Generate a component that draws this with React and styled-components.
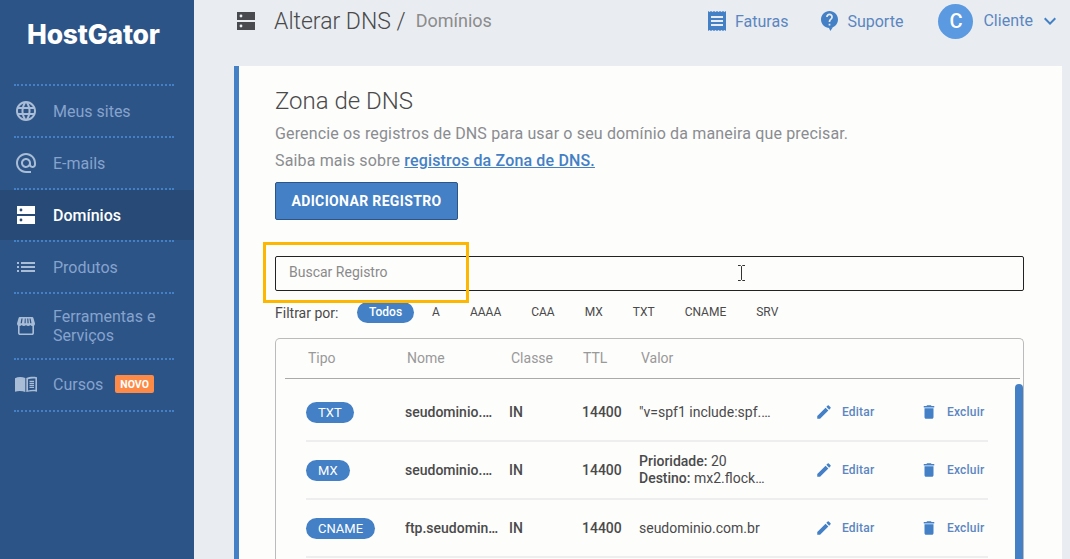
import React from 'react';
import styled, { createGlobalStyle } from 'styled-components';
import {
  MdLanguage, MdAlternateEmail, MdList, MdEdit, MdDelete, MdExpandMore,
} from 'react-icons/md';

const blue = '#4480c5';
const navy = '#2d5487';

const GlobalStyle = createGlobalStyle`
  html, body { margin: 0; padding: 0; height: 100%; overflow: hidden; }
  body { font-family: Roboto, "Liberation Sans", sans-serif; color: #4a4a4a; }
  * { box-sizing: border-box; }
`;

const Page = styled.div`
  display: flex;
  width: 1070px;
  height: 559px;
  overflow: hidden;
  background: #e9edf2;
`;

const Sidebar = styled.aside`
  flex: 0 0 194px;
  background: ${navy};
`;

const Logo = styled.div`
  height: 84px;
  padding: 18px 0 0 27px;
  font-family: Inter, sans-serif;
  font-size: 26.5px;
  font-weight: 800;
  line-height: 32px;
  letter-spacing: -0.2px;
  color: #fff;
`;

const Divider = styled.div`
  width: 160px;
  margin-left: 14px;
  border-top: 2px dotted ${blue};
`;

const NavItem = styled.a`
  display: flex;
  align-items: center;
  gap: 15px;
  height: ${(p) => (p.$tall ? 64 : 50)}px;
  padding: 0 0 ${(p) => (p.$raised ? 2 : 0)}px 14px;
  font-size: 16px;
  line-height: 19px;
  color: ${(p) => (p.$active ? '#fff' : '#86a3cd')};
  background: ${(p) => (p.$active ? '#274a77' : 'transparent')};
  font-weight: ${(p) => (p.$active ? 500 : 400)};
`;

const IconSlot = styled.span`
  display: flex;
  align-items: center;
  justify-content: center;
  flex: 0 0 24px;
  height: 24px;
  color: ${(p) => (p.$active ? '#fff' : '#a9bdd6')};
`;

const NewBadge = styled.span`
  margin-left: -3px;
  padding: 0 5px;
  height: 18px;
  border-radius: 2px;
  background: #fd8a46;
  color: #fff;
  font-size: 10.5px;
  font-weight: 700;
  line-height: 19px;
`;

const Main = styled.main`
  flex: 1;
  min-width: 0;
  padding: 0 8px 0 40px;
`;

const Header = styled.header`
  display: flex;
  align-items: center;
  height: 42px;
  margin-bottom: 24px;
  padding-left: 3px;
`;

const HeaderIcon = styled.span`
  display: flex;
  color: #484a50;
`;

const PageTitle = styled.h1`
  margin: 0 0 0 19px;
  font-size: 23px;
  font-weight: 300;
  color: #4a4a4a;
`;

const Crumb = styled.span`
  margin: -2px 0 0 10px;
  font-size: 18px;
  color: #8c8c8c;
`;

const HeaderLink = styled.a`
  display: flex;
  align-items: center;
  gap: ${(p) => p.$gap}px;
  margin-right: ${(p) => p.$after}px;
  margin-left: ${(p) => (p.$first ? 'auto' : 0)};
  font-size: 16px;
  color: #5b86c0;

  svg { color: ${blue}; }
`;

const User = styled.div`
  display: flex;
  align-items: center;
  font-size: 16px;
  color: #5b86c0;

  svg { margin-left: 5px; color: ${blue}; }
`;

const UserName = styled.span`
  margin-top: -2px;
  letter-spacing: 0.05px;
`;

const Avatar = styled.span`
  display: flex;
  align-items: center;
  justify-content: center;
  width: 35px;
  height: 35px;
  margin-right: 10px;
  border-radius: 50%;
  background: #5b9ae0;
  color: #fff;
  font-size: 20px;
  font-weight: 500;
`;

const Card = styled.section`
  height: 493px;
  padding: 21px 38px 0 36px;
  border-left: 5px solid ${blue};
  background: #fdfdfc;
`;

const CardTitle = styled.h2`
  margin: 0 0 5px;
  font-size: 24px;
  font-weight: 300;
  line-height: 28px;
  color: #4a4a4a;
`;

const Lead = styled.p`
  margin: 0;
  font-size: 16px;
  line-height: 27px;
  letter-spacing: 0.155px;
  color: #8a8c90;

  a {
    color: ${blue};
    font-weight: 500;
    text-decoration: underline;
  }
`;

const AddButton = styled.button`
  display: block;
  width: 183px;
  height: 38px;
  margin-top: 8px;
  padding: 0;
  border: 1px solid ${navy};
  border-radius: 2px;
  background: ${blue};
  color: #fff;
  font-family: inherit;
  font-size: 14px;
  font-weight: 700;
  letter-spacing: 0.35px;
`;

const SearchWrap = styled.div`
  position: relative;
  margin-top: 36px;
`;

const SearchInput = styled.input`
  display: block;
  width: 749px;
  height: 35px;
  padding: 0 13px 3px;
  border: 1px solid #222;
  border-radius: 2px;
  background: #fdfdfc;
  font-family: inherit;
  font-size: 14px;

  &::placeholder { color: #8a8a8a; opacity: 1; }
`;

const Highlight = styled.div`
  position: absolute;
  left: -12px;
  top: -14px;
  width: 206px;
  height: 61px;
  border: 3px solid #fdb700;
`;

const Cursor = styled.svg`
  position: absolute;
  left: 462px;
  top: 9px;
`;

const FilterRow = styled.div`
  display: flex;
  align-items: center;
  height: 21px;
  margin-top: 11px;
  font-size: 14px;
`;

const FilterLabel = styled.span`
  width: 82px;
  color: #4a4a4a;
`;

const FilterChip = styled.span`
  margin-right: ${(p) => p.$gap}px;
  padding: ${(p) => (p.$active ? '0 12px' : '0')};
  border-radius: 11px;
  background: ${(p) => (p.$active ? blue : 'transparent')};
  color: ${(p) => (p.$active ? '#fff' : '#4a4a4a')};
  font-size: 12px;
  font-weight: ${(p) => (p.$active ? 500 : 400)};
  line-height: 21px;
`;

const TableBox = styled.div`
  position: relative;
  width: 749px;
  height: 240px;
  margin-top: 15px;
  border: 1px solid #bbb;
  border-bottom: 0;
  border-radius: 5px 5px 0 0;
`;

const HeadRow = styled.div`
  display: grid;
  grid-template-columns: 99px 104px 72px 58px 1fr;
  align-items: center;
  height: 40px;
  margin: 0 3px 0 9px;
  padding: 0 0 2px 23px;
  border-bottom: 1px solid #aaa;
  font-size: 14px;
  color: #999;
`;

const Rows = styled.div`
  margin: 5px 0 0 30px;
  width: 682px;
`;

const Row = styled.div`
  display: grid;
  grid-template-columns: 99px 104px 73px 57px 178px 107px 64px;
  align-items: center;
  height: 58px;
  border-bottom: 2px solid #eee;
  font-size: 14px;
  line-height: 17px;
  color: #4a4a4a;
`;

const TypePill = styled.span`
  justify-self: start;
  padding: 0 12px;
  border-radius: 11px;
  background: ${blue};
  color: #fff;
  font-size: 13px;
  line-height: 21px;
`;

const Cell = styled.span`
  overflow: hidden;
  padding-right: ${(p) => p.$pad || 0}px;
  text-overflow: ellipsis;
  white-space: nowrap;
  font-weight: ${(p) => (p.$strong ? 500 : 400)};
`;

const Strong = styled.b`
  font-weight: 500;
`;

const Action = styled.a`
  display: flex;
  align-items: center;
  gap: 9px;
  margin-left: ${(p) => p.$shift}px;
  font-size: 12px;
  font-weight: 500;
  letter-spacing: 0.2px;
  color: #5b86c0;

  svg { flex: none; color: ${blue}; }
`;

const Scrollbar = styled.div`
  position: absolute;
  right: 0;
  top: 45px;
  bottom: 0;
  width: 8px;
  border-radius: 4px 4px 0 0;
  background: ${blue};
`;

function ServerIcon() {
  return (
    <svg width="18" height="18" viewBox="0 0 18 18">
      <path
        fill="currentColor"
        fillRule="evenodd"
        d="M0 0h18v8H0zM0 10h18v8H0zM4 2.6a1.4 1.4 0 1 0 0 2.8 1.4 1.4 0 0 0 0-2.8zM4 12.6a1.4 1.4 0 1 0 0 2.8 1.4 1.4 0 0 0 0-2.8z"
      />
    </svg>
  );
}

function StoreIcon() {
  return (
    <svg width="18" height="18" viewBox="0 0 18 18">
      <path fill="none" stroke="currentColor" strokeWidth="1.600" d="M1.800 8v8a1.200 1.200 0 0 0 1.200 1.200h12a1.200 1.200 0 0 0 1.200-1.200V8" />
      <path
        fill="currentColor"
        fillRule="evenodd"
        d="M3 0h12a1.500 1.500 0 0 1 1.500 1.200L18 6.500A2.500 2.500 0 0 1 15.500 9 2.600 2.600 0 0 1 13.300 8 2.700 2.700 0 0 1 11.100 9 2.700 2.700 0 0 1 9 8 2.700 2.700 0 0 1 6.900 9 2.700 2.700 0 0 1 4.700 8 2.600 2.600 0 0 1 2.500 9 2.500 2.500 0 0 1 0 6.500L1.500 1.200A1.500 1.500 0 0 1 3 0zM4.400 1.600L3.600 6.300h1.300l.7-4.700zM7.800 1.600L7.500 6.300h1.200V1.600zM10.200 1.600L10.500 6.300h1.200L11.300 1.600zM12.500 1.600L13.200 6.300h1.300l-.9-4.700z"
      />
    </svg>
  );
}

function BookIcon() {
  return (
    <svg width="24" height="24" viewBox="0 0 24 24">
      <path fill="currentColor" d="M1 6.200c3-1.500 7-1.500 10.300-.2v14c-3.300-1.300-7.300-1.300-10.300-.2z" />
      <path fill="currentColor" d="M12.300 6c3-1.300 7-1.700 10.700-.8v14.600c-3.700-.9-7.700-.5-10.700.2z" />
      <path fill={navy} d="M14 7.200c2-.7 4.800-1 7.400-.6v11.200c-2.600-.3-5.400 0-7.400.6z" />
      <path stroke="currentColor" strokeWidth="1.100" d="M15.500 9.400h4.500M15.500 11.400h4.500M15.500 13.400h4.500M15.500 15.400h4.500" />
    </svg>
  );
}

function InvoiceIcon() {
  return (
    <svg width="18" height="20" viewBox="0 0 18 20">
      <path
        fill="currentColor"
        fillRule="evenodd"
        d="M0 0l1.500 1L3 0l1.500 1L6 0l1.500 1L9 0l1.500 1L12 0l1.500 1L15 0l1.500 1L18 0v20l-1.500-1-1.500 1-1.500-1-1.500 1-1.500-1L9 20l-1.500-1L6 20l-1.500-1L3 20l-1.500-1L0 20zM3 5v2h12V5zM3 9v2h12V9zM3 13v2h12v-2z"
      />
    </svg>
  );
}

function HelpBubbleIcon() {
  return (
    <svg width="17" height="20" viewBox="2 2 20 23.500">
      <path fill="currentColor" d="M11 21h5l-3 4.500z" />
      <path
        fill="currentColor"
        d="M12 2C6.480 2 2 6.480 2 12s4.480 10 10 10 10-4.480 10-10S17.520 2 12 2zm1 17h-2v-2h2v2zm2.070-7.750l-.9.92C13.450 12.900 13 13.500 13 15h-2v-.5c0-1.100.45-2.100 1.170-2.830l1.240-1.260c.37-.36.59-.86.59-1.410 0-1.100-.9-2-2-2s-2 .9-2 2H8c0-2.210 1.790-4 4-4s4 1.790 4 4c0 .88-.36 1.680-.93 2.250z"
      />
    </svg>
  );
}

const navItems = [
  { label: 'Meus sites', icon: <MdLanguage size={24} /> },
  { label: 'E-mails', icon: <MdAlternateEmail size={24} /> },
  { label: 'Domínios', icon: <ServerIcon />, active: true },
  { label: 'Produtos', icon: <MdList size={24} /> },
  { label: 'Ferramentas e Serviços', icon: <StoreIcon />, tall: true },
  { label: 'Cursos', icon: <BookIcon />, badge: 'NOVO', raised: true },
];

const filters = [
  { label: 'Todos', gap: 18, active: true },
  { label: 'A', gap: 30 },
  { label: 'AAAA', gap: 30 },
  { label: 'CAA', gap: 30 },
  { label: 'MX', gap: 30 },
  { label: 'TXT', gap: 30 },
  { label: 'CNAME', gap: 30 },
  { label: 'SRV', gap: 0 },
];

const records = [
  { type: 'TXT', name: 'seudominio.com.br', value: '"v=spf1 include:spf.hostgator.com' },
  { type: 'MX', name: 'seudominio.com.br', priority: '20', target: 'mx2.flockmail.com' },
  { type: 'CNAME', name: 'ftp.seudominio.com.br', value: 'seudominio.com.br' },
];

function App() {
  return (
    <Page>
      <GlobalStyle />
      <Sidebar>
        <Logo>HostGator</Logo>
        <Divider />
        {navItems.map((item) => (
          <React.Fragment key={item.label}>
            <NavItem $active={item.active} $tall={item.tall} $raised={item.raised}>
              <IconSlot $active={item.active}>{item.icon}</IconSlot>
              <span>{item.label}</span>
              {item.badge && <NewBadge>{item.badge}</NewBadge>}
            </NavItem>
            <Divider />
          </React.Fragment>
        ))}
      </Sidebar>
      <Main>
        <Header>
          <HeaderIcon><ServerIcon /></HeaderIcon>
          <PageTitle>Alterar DNS /</PageTitle>
          <Crumb>Domínios</Crumb>
          <HeaderLink $first $gap={9} $after={33}>
            <InvoiceIcon />
            Faturas
          </HeaderLink>
          <HeaderLink $gap={9} $after={35}>
            <HelpBubbleIcon />
            Suporte
          </HeaderLink>
          <User>
            <Avatar>C</Avatar>
            <UserName>Cliente</UserName>
            <MdExpandMore size={24} />
          </User>
        </Header>
        <Card>
          <CardTitle>Zona de DNS</CardTitle>
          <Lead>Gerencie os registros de DNS para usar o seu domínio da maneira que precisar.</Lead>
          <Lead>
            Saiba mais sobre
            {' '}
            <a href="#zona">registros da Zona de DNS.</a>
          </Lead>
          <AddButton>ADICIONAR REGISTRO</AddButton>
          <SearchWrap>
            <SearchInput placeholder="Buscar Registro" />
            <Highlight />
            <Cursor width="9" height="16" viewBox="0 0 9 16">
              <path fill="none" stroke="#333" strokeWidth="1" d="M1 .5h2.500l1 1 1-1H8M4.500 1.500v13M1 15.500h2.500l1-1 1 1H8" />
            </Cursor>
          </SearchWrap>
          <FilterRow>
            <FilterLabel>Filtrar por:</FilterLabel>
            {filters.map((f) => (
              <FilterChip key={f.label} $active={f.active} $gap={f.gap}>{f.label}</FilterChip>
            ))}
          </FilterRow>
          <TableBox>
            <HeadRow>
              <span>Tipo</span>
              <span>Nome</span>
              <span>Classe</span>
              <span>TTL</span>
              <span>Valor</span>
            </HeadRow>
            <Rows>
              {records.map((r) => (
                <Row key={r.type}>
                  <TypePill>{r.type}</TypePill>
                  <Cell $strong $pad={10}>{r.name}</Cell>
                  <Cell $strong>IN</Cell>
                  <Cell $strong>14400</Cell>
                  {r.priority ? (
                    <Cell $pad={48}>
                      <Strong>Prioridade:</Strong>
                      {' '}
                      {r.priority}
                      <br />
                      <Strong>Destino:</Strong>
                      {' '}
                      {r.target}
                    </Cell>
                  ) : <Cell $pad={42}>{r.value}</Cell>}
                  <Action $shift={-2}>
                    <MdEdit size={18} />
                    Editar
                  </Action>
                  <Action $shift={-4}>
                    <MdDelete size={18} />
                    Excluir
                  </Action>
                </Row>
              ))}
            </Rows>
            <Scrollbar />
          </TableBox>
        </Card>
      </Main>
    </Page>
  );
}

export default App;
